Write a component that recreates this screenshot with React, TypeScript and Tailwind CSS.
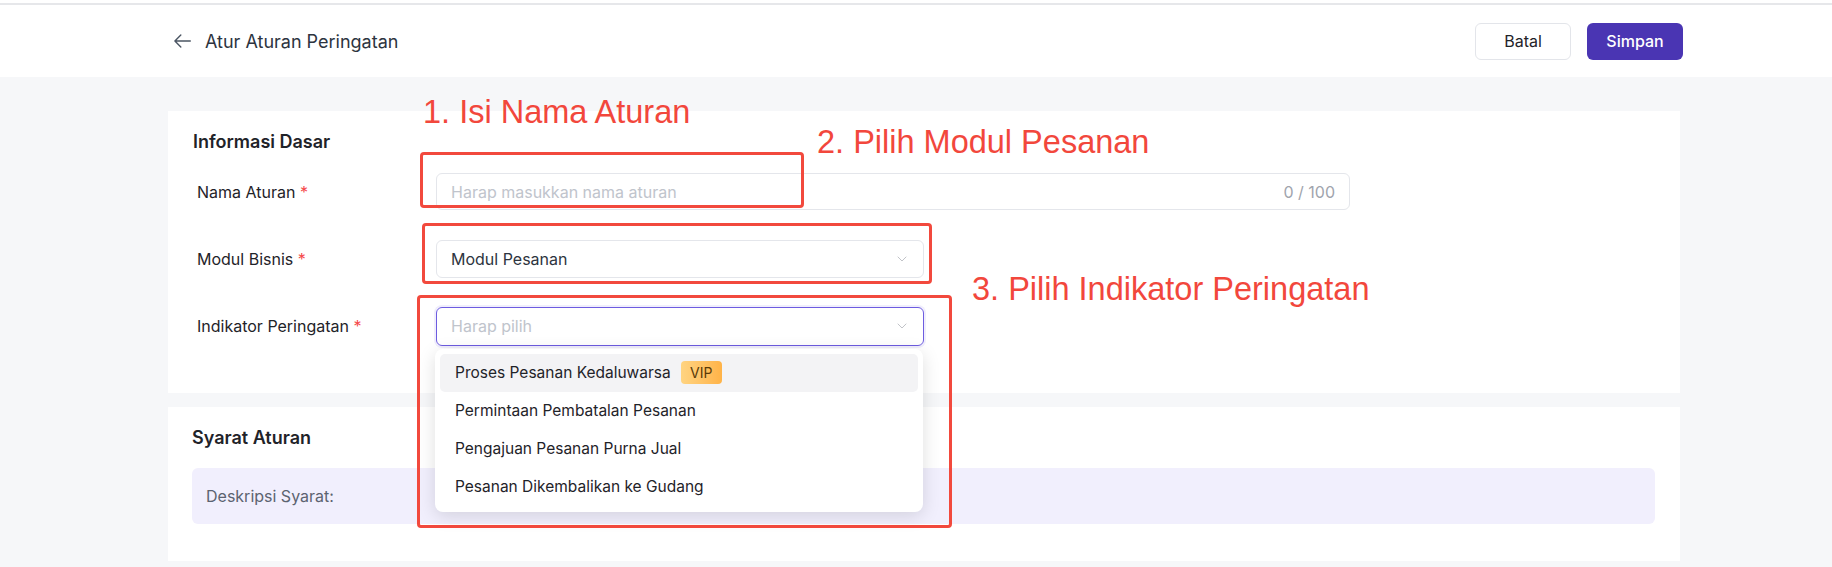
import React from "react";
import { ChevronDown } from "lucide-react";

const options = [
  "Proses Pesanan Kedaluwarsa",
  "Permintaan Pembatalan Pesanan",
  "Pengajuan Pesanan Purna Jual",
  "Pesanan Dikembalikan ke Gudang",
];

function Label({ text }: { text: string }) {
  return (
    <div className="w-[243px] shrink-0 pl-[4px] text-[16px] text-[#1f2329]">
      {text} <span className="text-[#f5484a]">*</span>
    </div>
  );
}

export default function App() {
  return (
    <div
      className="relative h-[567px] w-full overflow-hidden bg-[#f6f7f9]"
      style={{ fontFamily: "Inter, 'Noto Sans', sans-serif" }}
    >
      {/* header */}
      <div className="h-[77px] bg-white pt-[3px]">
        <div className="flex h-[74px] items-center justify-between border-t-2 border-[#e6e7ea] pl-[174px] pr-[149px]">
          <div className="flex items-center gap-[14px]">
            <svg width="17" height="14" viewBox="0 0 17 14" fill="none" stroke="#4b5563" strokeWidth="1.4" strokeLinecap="round" strokeLinejoin="round">
              <path d="M16.3 7H0.9M6.8 1.1L0.9 7l5.9 5.9" />
            </svg>
            <span className="text-[18px] text-[#2d3440]">Atur Aturan Peringatan</span>
          </div>
          <div className="flex items-center gap-[16px]">
            <button className="h-[37px] w-[96px] rounded-[6px] border border-[#e3e5ea] bg-white text-[16px] text-[#1f2329]">
              Batal
            </button>
            <button className="h-[37px] w-[96px] rounded-[6px] bg-[#4a35b3] text-[16px] font-medium text-white">
              Simpan
            </button>
          </div>
        </div>
      </div>

      {/* content */}
      <div className="flex flex-col gap-[14px] pl-[168px] pr-[152px] pt-[34px]">
        <div className="h-[282px] bg-white px-[25px] pt-[19px]">
          <div className="h-[24px] text-[18px] font-semibold leading-[24px] text-[#1f2329]">
            Informasi Dasar
          </div>
          <div className="mt-[19px] flex flex-col gap-[30px]">
            <div className="flex h-[37px] items-center">
              <Label text="Nama Aturan" />
              <div className="flex h-[37px] w-[914px] items-center justify-between rounded-[6px] border border-[#e4e6eb] px-[14px] text-[16px]">
                <span className="text-[#c0c4cc]">Harap masukkan nama aturan</span>
                <span className="text-[#a0a4ad]">0 / 100</span>
              </div>
            </div>
            <div className="flex h-[37px] items-center">
              <Label text="Modul Bisnis" />
              <div className="flex h-[38px] w-[488px] items-center justify-between rounded-[6px] border border-[#e4e6eb] pl-[14px] pr-[13px] text-[16px]">
                <span className="text-[#2d3440]">Modul Pesanan</span>
                <ChevronDown size={16} strokeWidth={1.25} className="text-[#b4b7bd]" />
              </div>
            </div>
            <div className="flex h-[38px] items-center">
              <Label text="Indikator Peringatan" />
              <div className="relative z-20">
                <div className="flex h-[39px] w-[488px] items-center justify-between rounded-[6px] border border-[#6d5ce0] pl-[14px] pr-[13px] text-[16px] shadow-[0_0_0_2px_rgba(109,92,224,0.1)]">
                  <span className="text-[#c0c4cc]">Harap pilih</span>
                  <ChevronDown size={16} strokeWidth={1.25} className="text-[#b4b7bd]" />
                </div>
                <div className="absolute left-[-1px] top-[42px] w-[488px] rounded-[8px] bg-white px-[5px] pb-[6px] pt-[5px] shadow-[0_4px_18px_rgba(0,0,0,0.13)]">
                  {options.map((o, i) => (
                    <div
                      key={o}
                      className={
                        "flex h-[38px] items-center gap-[10px] rounded-[5px] pl-[15px] text-[15.5px] text-[#1f2329] " +
                        (i === 0 ? "bg-[#f3f3f5]" : "")
                      }
                    >
                      <span>{o}</span>
                      {i === 0 && (
                        <span className="flex h-[23px] w-[41px] items-center justify-center rounded-[4px] bg-gradient-to-r from-[#ffd481] to-[#ffb347] text-[14px] text-[#5a3a08]">
                          VIP
                        </span>
                      )}
                    </div>
                  ))}
                </div>
              </div>
            </div>
          </div>
        </div>

        <div className="h-[154px] bg-white pl-[24px] pr-[25px] pt-[19px]">
          <div className="h-[24px] text-[18px] font-semibold leading-[24px] text-[#1f2329]">
            Syarat Aturan
          </div>
          <div className="mt-[18px] flex h-[56px] items-center rounded-[6px] bg-[#f1effd] pl-[14px] text-[16px] text-[#5c6370]">
            Deskripsi Syarat:
          </div>
        </div>
      </div>

      {/* annotations */}
      <div className="pointer-events-none absolute left-[420px] top-[152px] z-30 h-[56px] w-[384px] rounded-[4px] border-[3px] border-[#f2493d]" />
      <div className="pointer-events-none absolute left-[422px] top-[223px] z-30 h-[61px] w-[510px] rounded-[4px] border-[3px] border-[#f2493d]" />
      <div className="pointer-events-none absolute left-[417px] top-[295px] z-30 h-[233px] w-[535px] rounded-[4px] border-[3px] border-[#f2493d]" />
      <div
        className="absolute left-[423px] top-[96px] z-30 whitespace-nowrap text-[32.5px] leading-[32px] text-[#f2473c]"
        style={{ fontFamily: "'Liberation Sans', Arial, sans-serif" }}
      >
        1. Isi Nama Aturan
      </div>
      <div
        className="absolute left-[817px] top-[126px] z-30 whitespace-nowrap text-[32.5px] leading-[32px] text-[#f2473c]"
        style={{ fontFamily: "'Liberation Sans', Arial, sans-serif" }}
      >
        2. Pilih Modul Pesanan
      </div>
      <div
        className="absolute left-[972px] top-[273px] z-30 whitespace-nowrap text-[32.5px] leading-[32px] text-[#f2473c]"
        style={{ fontFamily: "'Liberation Sans', Arial, sans-serif" }}
      >
        3. Pilih Indikator Peringatan
      </div>
    </div>
  );
}
